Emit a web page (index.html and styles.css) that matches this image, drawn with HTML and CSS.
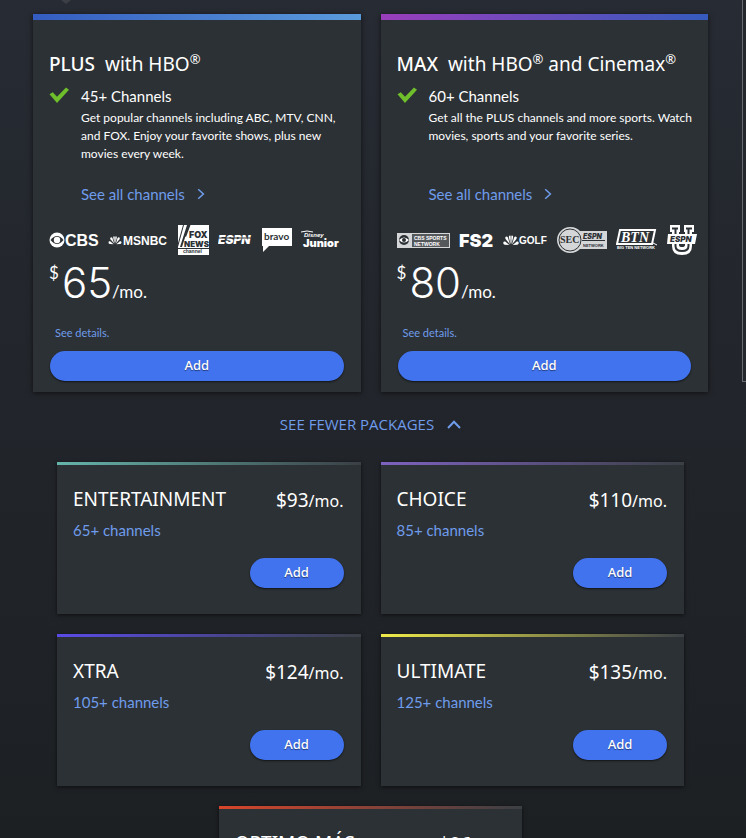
FILE: index.html
```html
<!DOCTYPE html>
<html lang="en">
<head>
    <meta charset="UTF-8">
    <meta name="viewport" content="width=device-width, initial-scale=1.0">
    <title>TV Packages</title>
    <link rel="stylesheet" href="styles.css">
</head>
<body>
    <svg class="symbols" aria-hidden="true">
        <symbol id="check" viewBox="0 0 20 16">
            <path d="M0.5 7.2 L3.8 5.2 L8 9.8 L17 0.4 L20 2.8 L8 16 Z" fill="#6fbe2c"/>
        </symbol>
        <symbol id="chevron-right" viewBox="0 0 8 12">
            <path d="M1.2 1.2 L6.4 6 L1.2 10.8" fill="none" stroke="currentColor" stroke-width="1.5"/>
        </symbol>
        <symbol id="peacock" viewBox="0 0 16 12">
            <g fill="#fff">
                <path d="M7.6 10.5 L5.9 3.5 C5.5 1.3 7.6 0.6 7.7 2.6 Z"/>
                <path d="M8.4 10.5 L10.1 3.5 C10.5 1.3 8.4 0.6 8.3 2.6 Z"/>
                <path d="M7 10.6 L2.6 5 C1.3 3 3.9 1.6 4.9 3.5 Z"/>
                <path d="M9 10.6 L13.4 5 C14.7 3 12.1 1.6 11.1 3.5 Z"/>
                <path d="M6.3 11 L1.8 10.8 C-0.6 10.2 0 6.8 2.2 7.6 Z"/>
                <path d="M9.7 11 L14.2 10.8 C16.6 10.2 16 6.8 13.8 7.6 Z"/>
            </g>
        </symbol>
    </svg>

    <div class="side-panel"></div>

    <main class="page">
        <div class="notch"></div>

        <section class="featured">
            <article class="package plus">
                <h2><b>PLUS</b> with HBO<sup>®</sup></h2>
                <div class="package-info">
                    <svg class="check" aria-hidden="true"><use href="#check"/></svg>
                    <div class="package-text">
                        <h3>45+ Channels</h3>
                        <p>Get popular channels including ABC, MTV, CNN, and FOX. Enjoy your favorite shows, plus new movies every week.</p>
                        <a class="see-all" href="#">See all channels <svg aria-hidden="true"><use href="#chevron-right"/></svg></a>
                    </div>
                </div>
                <div class="logos">
                    <svg width="50" height="20" viewBox="0 0 50 20">
                        <circle cx="8" cy="10" r="7.5" fill="#fff"/>
                        <path d="M1.5 10 Q8 2 14.5 10 Q8 18 1.5 10Z" fill="#2c3135"/>
                        <circle cx="8" cy="10" r="3.2" fill="#fff"/>
                        <text class="logo-bold" x="16" y="16" font-size="16">CBS</text>
                    </svg>
                    <svg width="61" height="18" viewBox="0 0 61 18">
                        <use href="#peacock" x="0" y="4" width="14" height="10"/>
                        <text class="logo-bold" x="15" y="14" font-size="12">MSNBC</text>
                    </svg>
                    <svg width="31" height="30" viewBox="0 0 31 30">
                        <path d="M0 0H31V30H0Z" fill="#fff"/>
                        <path d="M0 23.5H31" stroke="#2c3135"/>
                        <path d="M2 22 L9 0 H11 L4 22Z M6 10 L10 0 H12.5 L8 12Z M0 18 L5 0 H6 L0 22Z" fill="#2c3135"/>
                        <text class="logo-heavy dark" x="11" y="13" font-size="9">FOX</text>
                        <text class="logo-heavy dark" x="6" y="22" font-size="8">NEWS</text>
                        <text class="logo-bold dark" x="5" y="28" font-size="5">channel</text>
                    </svg>
                    <svg width="35" height="16" viewBox="0 0 35 16">
                        <text class="logo-heavy slant" x="0" y="12" font-size="12">ESPN</text>
                        <path d="M0 6H35" stroke="#2c3135"/>
                    </svg>
                    <svg width="30" height="24" viewBox="0 0 30 24">
                        <path d="M0 0H30V18H7L1 24V18H0Z" fill="#fff"/>
                        <text class="logo-round dark" x="2" y="12" font-size="10">bravo</text>
                    </svg>
                    <svg width="39" height="20" viewBox="0 0 39 20">
                        <path d="M0 2 Q6 0 12 2" fill="none" stroke="#fff"/>
                        <text class="logo-bold slant" x="3" y="7" font-size="6">Disney</text>
                        <text class="logo-heavy" x="2" y="17" font-size="11">Junior</text>
                    </svg>
                </div>
                <div class="price"><span class="currency">$</span><span class="amount">65</span><span class="per">/mo.</span></div>
                <a class="details" href="#">See details.</a>
                <button class="add" type="button">Add</button>
            </article>

            <article class="package max">
                <h2><b>MAX</b> with HBO<sup>®</sup> and Cinemax<sup>®</sup></h2>
                <div class="package-info">
                    <svg class="check" aria-hidden="true"><use href="#check"/></svg>
                    <div class="package-text">
                        <h3>60+ Channels</h3>
                        <p>Get all the PLUS channels and more sports. Watch movies, sports and your favorite series.</p>
                        <a class="see-all" href="#">See all channels <svg aria-hidden="true"><use href="#chevron-right"/></svg></a>
                    </div>
                </div>
                <div class="logos">
                    <svg width="53" height="15" viewBox="0 0 53 15">
                        <path d="M0 0H53V15H0Z" fill="#d5d6d7"/>
                        <path d="M15 1H52V14H15Z" fill="#54585b"/>
                        <circle cx="7" cy="7" r="5" fill="#2c3135"/>
                        <path d="M2 7 Q7 2 12 7 Q7 12 2 7Z" fill="#fff"/>
                        <circle cx="7" cy="7" r="2" fill="#2c3135"/>
                        <text class="logo-bold" x="17" y="7" font-size="5">CBS SPORTS</text>
                        <text class="logo-bold" x="17" y="13" font-size="5">NETWORK</text>
                    </svg>
                    <svg width="35" height="24" viewBox="0 0 35 24">
                        <text class="logo-heavy" x="0" y="19" font-size="18">FS2</text>
                    </svg>
                    <svg width="45" height="16" viewBox="0 0 45 16">
                        <use href="#peacock" x="0" y="2" width="16" height="12"/>
                        <text class="logo-bold" x="16" y="12" font-size="10">GOLF</text>
                    </svg>
                    <svg width="50" height="26" viewBox="0 0 50 26">
                        <path d="M13 0 C18 0 21 2 23 4 H50 V22 H23 C21 24 18 26 13 26 C6 26 0 20 0 13 S6 0 13 0Z" fill="#d5d6d7"/>
                        <circle cx="13" cy="13" r="11" fill="none" stroke="#2c3135"/>
                        <text class="logo-serif dark" x="3" y="16" font-size="10">SEC</text>
                        <text class="logo-heavy slant dark" x="26" y="12" font-size="7">ESPN</text>
                        <path d="M25 13.5H48" stroke="#2c3135"/>
                        <text class="logo-bold dark" x="26" y="20" font-size="4">NETWORK</text>
                    </svg>
                    <svg width="42" height="22" viewBox="0 0 42 22">
                        <path d="M4 1H39L36 15H1Z" fill="none" stroke="#fff" stroke-width="2"/>
                        <text class="logo-serif slant" x="5" y="13" font-size="14">BTN</text>
                        <path d="M37 14L41 16" stroke="#fff"/>
                        <text class="logo-bold" x="1" y="20" font-size="4">BIG TEN NETWORK</text>
                    </svg>
                    <svg width="30" height="30" viewBox="0 0 30 30">
                        <path d="M3 0H13V7H12V20Q12 22 15 22Q18 22 18 20V7H17V0H27V7H25V21Q25 30 15 30Q5 30 5 21V7H3Z" fill="#fff"/>
                        <path d="M5 3.5H11M19 3.5H25M8.5 3V21Q8.5 26 15 26Q21.5 26 21.5 21V3" fill="none" stroke="#2c3135" stroke-width="2"/>
                        <path d="M1 9H30L28 19H0Z" fill="#fff"/>
                        <text class="logo-heavy slant dark" x="3" y="17" font-size="8">ESPN</text>
                    </svg>
                </div>
                <div class="price"><span class="currency">$</span><span class="amount">80</span><span class="per">/mo.</span></div>
                <a class="details" href="#">See details.</a>
                <button class="add" type="button">Add</button>
            </article>
        </section>

        <button class="toggle" type="button">
            SEE FEWER PACKAGES
            <svg viewBox="0 0 14 9" aria-hidden="true"><path d="M1 8 L7 1.8 L13 8" fill="none" stroke="currentColor" stroke-width="2"/></svg>
        </button>

        <section class="more">
            <article class="small-package entertainment">
                <header><h2>ENTERTAINMENT</h2><p>$93<small>/mo.</small></p></header>
                <a href="#">65+ channels</a>
                <button class="add" type="button">Add</button>
            </article>
            <article class="small-package choice">
                <header><h2>CHOICE</h2><p>$110<small>/mo.</small></p></header>
                <a href="#">85+ channels</a>
                <button class="add" type="button">Add</button>
            </article>
            <article class="small-package xtra">
                <header><h2>XTRA</h2><p>$124<small>/mo.</small></p></header>
                <a href="#">105+ channels</a>
                <button class="add" type="button">Add</button>
            </article>
            <article class="small-package ultimate">
                <header><h2>ULTIMATE</h2><p>$135<small>/mo.</small></p></header>
                <a href="#">125+ channels</a>
                <button class="add" type="button">Add</button>
            </article>
            <article class="small-package optimo">
                <header><h2>OPTIMO MÁS</h2><p>$86</p></header>
            </article>
        </section>
    </main>
</body>
</html>
```
FILE: styles.css
```css
* {
    box-sizing: border-box;
}

body {
    margin: 0;
    font-family: Lato, "Open Sans", sans-serif;
    color: #fff;
    background-color: #1d2023;
}

h2, h3, p {
    margin: 0;
    font-weight: 400;
}

h2,
.small-package header p {
    font-family: "Noto Sans", sans-serif;
    font-size: 19px;
}

a {
    color: #6f9cec;
    text-decoration: none;
}

.symbols {
    display: none;
}

.page {
    height: 100vh;
    overflow: hidden;
    padding: 0 38px 0 33px;
    background: linear-gradient(#272b33, #22252b 45%, #1d2023);
}

/* tail of the callout above the cards */
.notch {
    width: 10px;
    height: 4px;
    margin: 0 0 10px 28px;
    background-color: #3c3f45;
    clip-path: polygon(0 0, 100% 0, 50% 100%);
}

.side-panel {
    position: absolute;
    top: 0;
    right: 0;
    width: 4px;
    height: 382px;
    border-left: 1px solid #676a70;
    border-bottom: 1px solid #676a70;
    background-color: #24272c;
}

.featured {
    display: grid;
    grid-template-columns: 1fr 1fr;
    gap: 20px;
}

.package {
    display: flex;
    flex-direction: column;
    padding: 28px 8px 11px 16px;
    border-top: 6px solid;
    background-color: #2c3135;
    box-shadow: 0 1px 5px rgba(0, 0, 0, 0.6);
}

.plus {
    border-image: linear-gradient(to right, #345cc0, #5a9bdc) 1;
}

.max {
    border-image: linear-gradient(to right, #9a3dbb, #355bbd) 1;
}

.package h2 {
    line-height: 32px;
    white-space: nowrap;
}

.package h2 b {
    margin-right: 5px;
    font-weight: 500;
}

.package sup {
    font-size: 13px;
    line-height: 0;
}

.package-info {
    display: flex;
    gap: 12px;
    height: 145px;
    padding-top: 4px;
}

.check {
    flex: none;
    width: 20px;
    height: 16px;
    margin-top: 3px;
}

.package-text {
    display: flex;
    flex-direction: column;
    align-items: flex-start;
}

.package-text h3 {
    font-size: 15px;
    line-height: 24px;
}

.package-text p {
    min-height: 54px;
    margin-top: 1px;
    font-size: 12px;
    line-height: 18px;
}

.see-all {
    display: flex;
    align-items: center;
    gap: 12px;
    margin-top: 20px;
    font-size: 15px;
    line-height: 22px;
}

.see-all svg {
    width: 8px;
    height: 12px;
}

.logos {
    display: flex;
    align-items: center;
    gap: 9px;
    height: 30px;
}

.logos svg {
    flex: none;
}

.logos text {
    fill: #fff;
}

.logos .dark {
    fill: #2c3135;
}

.logo-bold {
    font-family: "Liberation Sans", sans-serif;
    font-weight: 700;
}

.logo-heavy {
    font-family: Inter, sans-serif;
    font-weight: 900;
}

.logo-round {
    font-family: Lato, sans-serif;
    font-weight: 700;
}

.logo-serif {
    font-family: "Liberation Serif", serif;
    font-weight: 700;
}

.slant {
    font-style: italic;
}

.price {
    display: flex;
    align-items: baseline;
    height: 56px;
}

.currency {
    align-self: flex-start;
    margin: 8px 3px 0 0;
    font-size: 17px;
    line-height: 20px;
}

.amount {
    font-family: Inter, sans-serif;
    font-size: 42px;
    font-weight: 300;
    line-height: 56px;
}

.per {
    font-size: 17px;
}

.details {
    align-self: flex-start;
    margin: 14px 0 10px 6px;
    font-size: 11px;
    line-height: 16px;
}

.add {
    height: 30px;
    padding: 0 0 2px;
    border: 0;
    border-radius: 15px;
    background-color: #4273ef;
    box-shadow: 0 1px 2px rgba(0, 0, 0, 0.6);
    color: #fff;
    font-family: "Noto Sans", sans-serif;
    font-size: 13px;
    font-weight: 500;
    text-shadow: 0 1px 1px rgba(0, 0, 0, 0.5);
    cursor: pointer;
}

.package .add {
    margin: 0 9px 0 1px;
}

.toggle {
    display: flex;
    align-items: center;
    gap: 13px;
    margin: 22px auto 28px;
    padding: 0;
    border: 0;
    background: none;
    color: #6f9cec;
    font-family: "Open Sans", sans-serif;
    font-size: 15px;
    line-height: 20px;
    cursor: pointer;
}

.toggle svg {
    width: 14px;
    height: 9px;
}

.more {
    display: flex;
    flex-wrap: wrap;
    justify-content: center;
    gap: 20px;
    padding: 0 24px;
}

.small-package {
    display: flex;
    flex-direction: column;
    align-items: flex-start;
    width: calc(50% - 10px);
    padding: 20px 17px 26px 16px;
    border-top: 3px solid;
    background-color: #2c3135;
    box-shadow: 0 1px 4px rgba(0, 0, 0, 0.6);
}

.small-package header {
    display: flex;
    justify-content: space-between;
    align-items: flex-start;
    width: 100%;
    height: 28px;
    line-height: 28px;
}

.small-package header p {
    line-height: 30px;
}

.small-package small {
    font-size: 16px;
}

.small-package a {
    margin: 6px 0 17px;
    font-size: 15px;
    line-height: 22px;
}

.small-package .add {
    align-self: flex-end;
    width: 94px;
}

.entertainment {
    border-image: linear-gradient(to right, #65b5ab, #3a3f45) 1;
}

.choice {
    border-image: linear-gradient(to right, #7e62c0, #3a3f45) 1;
}

.xtra {
    border-image: linear-gradient(to right, #5a4be8, #3a3f45) 1;
}

.ultimate {
    border-image: linear-gradient(to right, #f0ec4a, #3a3f45) 1;
}

.optimo {
    padding-right: 51px;
    border-image: linear-gradient(to right, #d8452a, #3a3f45) 1;
}
```
